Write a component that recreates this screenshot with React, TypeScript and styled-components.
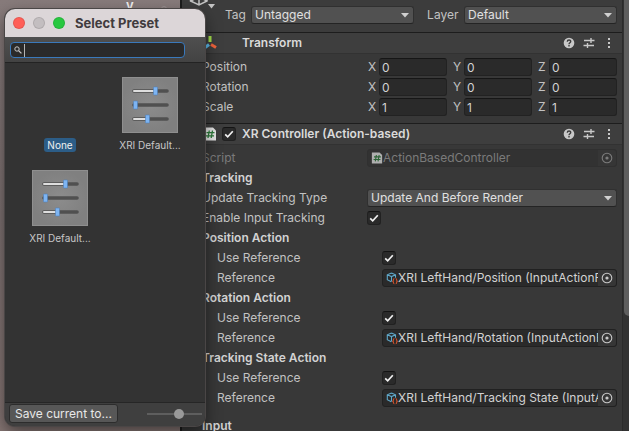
import React, { useState } from "react";
import styled, { createGlobalStyle, css } from "styled-components";

const Global = createGlobalStyle`
  * { box-sizing: border-box; }
  body {
    margin: 0;
    overflow: hidden;
    font-family: Inter, "Liberation Sans", sans-serif;
    font-size: 12px;
    line-height: 16px;
    color: #c2c2c2;
  }
  button, input, select { font: inherit; color: inherit; margin: 0; }
  h1, h2, h3 { margin: 0; font-size: inherit; line-height: inherit; font-weight: 600; }
`;

const Desktop = styled.main`
  position: relative;
  display: flex;
  height: 100vh;
  overflow: hidden;
  background: linear-gradient(#877b7b, #7c7070 50%, #857573);
`;

const SceneView = styled.div`
  flex: 0 0 180px;
  position: relative;
`;

const AxisLabel = styled.span`
  position: absolute;
  left: 126px;
  top: 0;
  font-size: 13px;
  line-height: 10px;
  font-weight: 600;
  color: #f0eeee;
`;

const AxisRing = styled.span`
  position: absolute;
  left: 161px;
  top: 6px;
  width: 6px;
  height: 6px;
  border: 1px solid #9b9191;
  border-radius: 50%;
`;

const Inspector = styled.section`
  flex: 1;
  min-width: 0;
  border-left: 2px solid #1c1c1c;
  background: #383838;
`;

const ScrollTrack = styled.div`
  flex: 0 0 7px;
  border-left: 1px solid #2b2b2b;
  padding-left: 1px;
  background: #323232;
`;

const ScrollThumb = styled.div`
  height: 316px;
  background: #5e5e5e;
  border-radius: 0 0 0 5px;
`;

const ObjectHeader = styled.div`
  display: flex;
  align-items: flex-start;
  height: 32px;
  padding: 6px 5px 0 7px;
  background: #3c3c3c;
`;

const ObjectIcon = styled.svg`
  flex: none;
  width: 28px;
  height: 18px;
  margin: -6px 8px 0 0;
`;

const ObjectLabel = styled.label<{ $w: number; $pad?: number }>`
  flex: none;
  width: ${(p) => p.$w}px;
  padding-left: ${(p) => p.$pad ?? 0}px;
  line-height: 18px;
`;

const SelectBox = styled.div<{ $grow?: number }>`
  position: relative;
  flex: ${(p) => p.$grow ?? 1} 1 0;
  min-width: 0;
  height: 18px;
  select {
    display: block;
    appearance: none;
    width: 100%;
    height: 18px;
    padding: 0 18px 0 3px;
    line-height: 16px;
    border: 1px solid #303030;
    border-bottom-color: #242424;
    border-radius: 3px;
    background: #515151;
    color: #e0e0e0;
    outline: none;
  }
  svg {
    position: absolute;
    right: 5px;
    top: 7px;
    width: 8px;
    height: 5px;
    pointer-events: none;
  }
`;

const ComponentSection = styled.section`
  border-top: 1px solid #1d1d1d;
`;

const ComponentHeader = styled.header`
  display: flex;
  align-items: center;
  height: 21px;
  padding: 0 5px 0 20px;
  background: #3e3e3e;
  border-bottom: 1px solid #323232;
  color: #dadada;
  h2 { flex: 1; }
`;

const HeaderIcon = styled.svg`
  flex: none;
  width: 16px;
  height: 16px;
  margin-right: 4px;
`;

const ToggleSlot = styled.span`
  flex: none;
  width: 20px;
  display: flex;
`;

const IconButton = styled.button`
  display: flex;
  align-items: center;
  justify-content: center;
  width: 16px;
  height: 16px;
  margin-left: 4px;
  padding: 0;
  border: 0;
  background: none;
`;

const Rows = styled.div`
  padding: 3px 5px 6px 20px;
`;

const Row = styled.div<{ $indent?: boolean; $dim?: boolean }>`
  display: flex;
  align-items: center;
  height: 20px;
  padding-left: ${(p) => (p.$indent ? 15 : 0)}px;
  ${(p) => p.$dim && css`color: #7b7b7b;`}
`;

const InputRow = styled(Row)`
  margin-top: 8px;
`;

const RowLabel = styled.label`
  flex: 0 0 165px;
  white-space: nowrap;
`;

const RowTitle = styled.h3`
  color: #d2d2d2;
`;

const Axes = styled.div`
  flex: 1;
  display: grid;
  grid-template-columns: repeat(3, 1fr);
  gap: 5px;
`;

const Axis = styled.label`
  display: flex;
  span { flex: 0 0 12px; padding-left: 1px; line-height: 18px; }
`;

const NumberInput = styled.input`
  flex: 1;
  width: 0;
  height: 18px;
  padding: 0 2px;
  border: 1px solid #222;
  border-top-color: #161616;
  border-radius: 3px;
  background: #2a2a2a;
  color: #d2d2d2;
  outline: none;
`;

const Tick = styled.input`
  appearance: none;
  width: 14px;
  height: 14px;
  border: 1px solid #212121;
  border-top-color: #141414;
  border-radius: 3px;
  background: #2a2a2a;
`;

const TickBox = styled.span`
  position: relative;
  display: flex;
  width: 14px;
  height: 14px;
  svg {
    position: absolute;
    inset: 0;
    pointer-events: none;
  }
`;

const ObjectField = styled.div<{ $dim?: boolean }>`
  flex: 1;
  min-width: 0;
  display: flex;
  align-items: center;
  height: 18px;
  padding-left: 3px;
  border: 1px solid ${(p) => (p.$dim ? "#303030" : "#212121")};
  border-radius: 3px;
  background: ${(p) => (p.$dim ? "#323232" : "#2a2a2a")};
  color: ${(p) => (p.$dim ? "#7b7b7b" : "#d2d2d2")};
  svg { flex: none; }
`;

const ObjectName = styled.span`
  flex: 1;
  overflow: hidden;
  white-space: nowrap;
`;

const PickButton = styled.button`
  flex: none;
  display: flex;
  align-items: center;
  justify-content: center;
  width: 18px;
  height: 16px;
  padding: 0;
  border: 0;
  border-radius: 0 3px 3px 0;
  background: #363636;
`;

const Dialog = styled.section`
  position: absolute;
  left: 5px;
  top: 9px;
  width: 200px;
  height: 417px;
  display: flex;
  flex-direction: column;
  overflow: hidden;
  border-radius: 10px;
  background: #333;
  box-shadow: 0 0 0 1px #4a4646, 0 6px 16px rgba(0, 0, 0, 0.5);
`;

const TitleBar = styled.header`
  display: flex;
  align-items: center;
  gap: 8px;
  height: 28px;
  padding-left: 8px;
  background: #dcd6d8;
  color: #413c3e;
  h1 { font-size: 13px; font-weight: 700; margin-left: 2px; }
`;

const WindowButton = styled.button<{ $color: string }>`
  width: 12px;
  height: 12px;
  padding: 0;
  border: 1px solid rgba(0, 0, 0, 0.1);
  border-radius: 50%;
  background: ${(p) => p.$color};
  background-clip: border-box;
`;

const SearchBar = styled.div`
  height: 26px;
  padding: 5px 20px 5px 5px;
  border-bottom: 1px solid #232323;
  background: linear-gradient(#4f4f4f, #434343);
`;

const SearchField = styled.label`
  display: flex;
  align-items: center;
  height: 16px;
  padding: 0 3px;
  border: 1px solid #3a79bb;
  border-radius: 4px;
  background: #2a2a2a;
  input {
    flex: 1;
    width: 0;
    height: 13px;
    margin-left: 2px;
    padding: 0 2px;
    border: 0;
    border-left: 1px solid #b4b4b4;
    background: none;
    outline: none;
  }
`;

const PresetGrid = styled.div`
  flex: 1;
  display: grid;
  grid-template-columns: 90px 90px;
  grid-auto-rows: 75px;
  gap: 18px 0;
  align-content: start;
  padding: 14px 10px;
`;

const Preset = styled.button<{ $selected?: boolean }>`
  display: flex;
  flex-direction: column;
  align-items: center;
  justify-content: flex-end;
  gap: 5px;
  padding: 0;
  border: 0;
  background: none;
  font-size: 10px;
  line-height: 14px;
  span {
    padding: 0 3px;
    border-radius: 3px;
    color: ${(p) => (p.$selected ? "#f0f0f0" : "#c8c8c8")};
    background: ${(p) => (p.$selected ? "#2c5d87" : "none")};
  }
`;

const DialogFooter = styled.footer`
  display: flex;
  align-items: center;
  justify-content: space-between;
  height: 24px;
  padding: 0 3px 2px 4px;
  border-top: 1px solid #262626;
  background: #3f3f3f;
`;

const SaveButton = styled.button`
  height: 19px;
  padding: 0 5px;
  line-height: 16px;
  border: 1px solid #2c2c2c;
  border-radius: 3px;
  background: #575757;
  color: #e8e8e8;
`;

const SizeSlider = styled.input`
  appearance: none;
  width: 55px;
  height: 12px;
  background: linear-gradient(#5e5e5e, #5e5e5e) center / 100% 2px no-repeat;
  &::-webkit-slider-thumb {
    appearance: none;
    width: 10px;
    height: 10px;
    border-radius: 50%;
    background: #999;
  }
`;

const Check = ({ label, id }: { label?: string; id?: string }) => {
  const [on, setOn] = useState(true);
  return (
    <TickBox>
      <Tick type="checkbox" id={id} aria-label={label} checked={on} onChange={() => setOn(!on)} />
      {on && (
        <svg width="14" height="14" viewBox="0 0 14 14">
          <path d="M3.2 7.4 5.7 9.8 10.8 4.2" fill="none" stroke="#f0f0f0" strokeWidth="1.7" />
        </svg>
      )}
    </TickBox>
  );
};

const Dropdown = ({ id, value, grow }: { id: string; value: string; grow?: number }) => (
  <SelectBox $grow={grow}>
    <select id={id} defaultValue={value}>
      <option>{value}</option>
    </select>
    <svg viewBox="0 0 8 5"><path d="M0 0h8L4 4.6z" fill="#d0d0d0" /></svg>
  </SelectBox>
);

const HeaderActions = () => (
  <>
    <IconButton aria-label="Help">
      <svg width="12" height="12" viewBox="0 0 12 12">
        <circle cx="6" cy="6" r="5.3" fill="#c8c8c8" />
        <path d="M4.3 4.7C4.3 2.4 7.8 2.5 7.7 4.6 7.6 5.8 6 5.7 6 7.2" fill="none" stroke="#3c3c3c" strokeWidth="1.4" />
        <path d="M5.3 8h1.4v1.4H5.3z" fill="#3c3c3c" />
      </svg>
    </IconButton>
    <IconButton aria-label="Presets">
      <svg width="12" height="12" viewBox="0 0 12 12">
        <path d="M1 3.5h6.5M8 3.5h3.5M8 1v5M.5 8.5H4M5 8.5h6M4.5 6v5" fill="none" stroke="#c8c8c8" strokeWidth="1.4" />
      </svg>
    </IconButton>
    <IconButton aria-label="More">
      <svg width="12" height="12" viewBox="0 0 12 12" fill="#c8c8c8">
        <path d="M5 1h2v2H5zM5 5h2v2H5zM5 9h2v2H5z" />
      </svg>
    </IconButton>
  </>
);

const ScriptPage = () => (
  <>
    <path d="M2 1.5h9l3 3v10H2z" fill="#e4e4e4" />
    <path d="M7.3 4.5 6 12M10.5 4.5 9.2 12M4.5 6.7h8M4 9.8h8" fill="none" stroke="#2c7a3a" strokeWidth="1.3" />
  </>
);

const Picker = ({ name, dim }: { name: string; dim?: boolean }) => (
  <PickButton aria-label={`Pick ${name}`} disabled={dim}>
    <svg width="12" height="12" viewBox="0 0 12 12">
      <circle cx="6" cy="6" r="4.8" fill="none" stroke={dim ? "#7b7b7b" : "#c8c8c8"} strokeWidth="1.1" />
      <circle cx="6" cy="6" r="1.6" fill={dim ? "#7b7b7b" : "#c8c8c8"} />
    </svg>
  </PickButton>
);

const ActionIcon = () => (
  <svg width="12" height="14" viewBox="0 0 12 14" fill="none">
    <path d="M5.5 2 9.5 3.8v3M5.5 2 1.3 3.8v4.9l4 2M1.3 3.8 5.5 5.6l4-1.8M5.5 5.6v5" stroke="#5fa8c9" strokeWidth="1.1" />
    <path d="M8.4 7.5c-1.4 0-.6 2.2-1.5 2.7.9.5.1 2.6 1.5 2.6M9.7 7.5c1.4 0 .6 2.2 1.5 2.7-.9.5-.1 2.6-1.5 2.6" stroke="#d4532c" strokeWidth="1.1" />
  </svg>
);

const Thumbnail = () => (
  <svg width="56" height="56" viewBox="0 0 56 56">
    <defs>
      <radialGradient id="thumb">
        <stop offset="0" stopColor="#8c8c8c" />
        <stop offset="1" stopColor="#808080" />
      </radialGradient>
    </defs>
    <rect width="56" height="56" fill="url(#thumb)" />
    <rect x=".5" y=".5" width="55" height="55" fill="none" stroke="#8f8f8f" />
    {[[14, 33], [28, 13], [42, 25]].map(([y, x]) => (
      <g key={y}>
        <path d={`M12 ${y}H45`} stroke="#505050" strokeWidth="3.6" strokeLinecap="round" />
        {x > 15 && <path d={`M12 ${y}H${x}`} stroke="#dedede" strokeWidth="2" strokeLinecap="round" />}
        <rect x={x - 1.5} y={y - 4} width="4" height="8" rx=".5" fill="#7db4f2" stroke="#4f7fb8" strokeWidth=".6" />
      </g>
    ))}
  </svg>
);

const transform = [
  { name: "Position", value: 0 },
  { name: "Rotation", value: 0 },
  { name: "Scale", value: 1 },
];

const actions = [
  { title: "Position Action", target: "XRI LeftHand/Position (InputActionReference)" },
  { title: "Rotation Action", target: "XRI LeftHand/Rotation (InputActionReference)" },
  { title: "Tracking State Action", target: "XRI LeftHand/Tracking State (InputActionReference)" },
];

export default function App() {
  return (
    <>
      <Global />
      <Desktop>
        <SceneView>
          <AxisLabel>y</AxisLabel>
          <AxisRing />
        </SceneView>
        <Inspector>
          <ObjectHeader>
            <ObjectIcon viewBox="0 0 28 18">
              <path d="M1.5-3v4l8.5 4 8-4v-4M10 5v-8M1.5 1 10-3l8 4" fill="none" stroke="#c4c4c4" strokeWidth="1.5" />
              <path d="M19 4h7l-3.5 4.4z" fill="#c4c4c4" />
            </ObjectIcon>
            <ObjectLabel $w={26} htmlFor="tag">Tag</ObjectLabel>
            <Dropdown id="tag" value="Untagged" grow={16} />
            <ObjectLabel $w={50} $pad={13} htmlFor="layer">Layer</ObjectLabel>
            <Dropdown id="layer" value="Default" grow={15} />
          </ObjectHeader>

          <ComponentSection>
            <ComponentHeader>
              <HeaderIcon viewBox="0 0 16 16" fill="none" strokeWidth="3">
                <path d="M8 1v6" stroke="#a4e04a" />
                <path d="M7 9.5 2.5 13" stroke="#5bb8e8" />
                <path d="M9 9.5 14 12.5" stroke="#f0643c" />
              </HeaderIcon>
              <ToggleSlot />
              <h2>Transform</h2>
              <HeaderActions />
            </ComponentHeader>
            <Rows>
              {transform.map((t) => (
                <Row key={t.name}>
                  <RowLabel as="span">{t.name}</RowLabel>
                  <Axes>
                    {["X", "Y", "Z"].map((axis) => (
                      <Axis key={axis}>
                        <span>{axis}</span>
                        <NumberInput aria-label={`${t.name} ${axis}`} defaultValue={t.value} />
                      </Axis>
                    ))}
                  </Axes>
                </Row>
              ))}
            </Rows>
          </ComponentSection>

          <ComponentSection>
            <ComponentHeader>
              <HeaderIcon viewBox="0 0 16 16"><ScriptPage /></HeaderIcon>
              <ToggleSlot><Check label="Enable XR Controller" /></ToggleSlot>
              <h2>XR Controller (Action-based)</h2>
              <HeaderActions />
            </ComponentHeader>
            <Rows>
              <Row $dim>
                <RowLabel as="span">Script</RowLabel>
                <ObjectField $dim>
                  <svg width="12" height="12" viewBox="1 1 14 14" opacity=".7"><ScriptPage /></svg>
                  <ObjectName>ActionBasedController</ObjectName>
                  <Picker name="script" dim />
                </ObjectField>
              </Row>
              <Row><RowTitle>Tracking</RowTitle></Row>
              <Row>
                <RowLabel htmlFor="update">Update Tracking Type</RowLabel>
                <Dropdown id="update" value="Update And Before Render" />
              </Row>
              <Row>
                <RowLabel htmlFor="enable">Enable Input Tracking</RowLabel>
                <Check id="enable" />
              </Row>
              {actions.map((a, i) => (
                <React.Fragment key={a.title}>
                  <Row><RowTitle>{a.title}</RowTitle></Row>
                  <Row $indent>
                    <RowLabel htmlFor={`use-${i}`}>Use Reference</RowLabel>
                    <Check id={`use-${i}`} />
                  </Row>
                  <Row $indent>
                    <RowLabel as="span">Reference</RowLabel>
                    <ObjectField>
                      <ActionIcon />
                      <ObjectName>{a.target}</ObjectName>
                      <Picker name={a.title} />
                    </ObjectField>
                  </Row>
                </React.Fragment>
              ))}
              <InputRow><RowTitle>Input</RowTitle></InputRow>
            </Rows>
          </ComponentSection>
        </Inspector>
        <ScrollTrack><ScrollThumb /></ScrollTrack>

        <Dialog role="dialog" aria-label="Select Preset">
          <TitleBar>
            <WindowButton $color="#ff5f57" aria-label="Close" />
            <WindowButton $color="#c3bec0" aria-label="Minimize" />
            <WindowButton $color="#28c840" aria-label="Zoom" />
            <h1>Select Preset</h1>
          </TitleBar>
          <SearchBar>
            <SearchField>
              <svg width="8" height="8" viewBox="0 0 8 8" fill="none" stroke="#c8c8c8">
                <circle cx="3" cy="3" r="2.2" />
                <path d="M4.6 4.6 7.4 7.4" strokeWidth="1.3" />
              </svg>
              <input type="text" aria-label="Search presets" />
            </SearchField>
          </SearchBar>
          <PresetGrid>
            <Preset $selected><span>None</span></Preset>
            <Preset><Thumbnail /><span>XRI Default...</span></Preset>
            <Preset><Thumbnail /><span>XRI Default...</span></Preset>
          </PresetGrid>
          <DialogFooter>
            <SaveButton>Save current to...</SaveButton>
            <SizeSlider type="range" aria-label="Thumbnail size" min={0} max={100} defaultValue={60} />
          </DialogFooter>
        </Dialog>
      </Desktop>
    </>
  );
}
